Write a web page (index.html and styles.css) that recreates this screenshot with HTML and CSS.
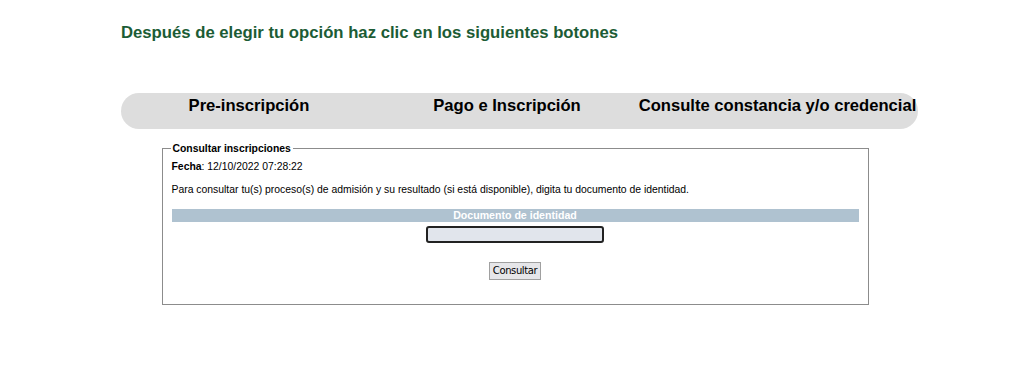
FILE: index.html
```html
<!DOCTYPE html>
<html lang="es">
<head>
  <meta charset="UTF-8" />
  <title>Consultar inscripciones</title>
  <link rel="stylesheet" href="styles.css">
</head>
<body>
  <div class="page">
    <h2 class="intro">Después de elegir tu opción haz clic en los siguientes botones</h2>

    <div class="tabs">
      <a class="tab" href="#">Pre-inscripción</a>
      <a class="tab" href="#">Pago e Inscripción</a>
      <a class="tab" href="#">Consulte constancia y/o credencial</a>
    </div>
  </div>

  <fieldset class="box">
    <legend>Consultar inscripciones</legend>
    <div class="fecha"><b>Fecha</b>: 12/10/2022 07:28:22</div>
    <p class="help">Para consultar tu(s) proceso(s) de admisión y su resultado (si está disponible), digita tu documento de identidad.</p>
    <div class="label">Documento de identidad</div>
    <div class="field">
      <input type="text" class="doc" autofocus>
    </div>
    <div class="field">
      <button class="btn">Consultar</button>
    </div>
  </fieldset>
</body>
</html>
```

FILE: styles.css
```css
body {
  margin: 0;
  font-family: "Liberation Sans", Arial, sans-serif;
  background: #fff;
  color: #000;
}

.page {
  margin-left: 121px;
  width: 797px;
}

.intro {
  color: #1c5c35;
  font-size: 16.7px;
  font-weight: bold;
  margin: 0;
  padding-top: 23px;
}

.tabs {
  margin-top: 50px;
  height: 36px;
  background: #dddddd;
  border-radius: 18px;
  display: grid;
  grid-template-columns: 256px 260px 281px;
}

.tab {
  color: #000;
  text-decoration: none;
  font-weight: bold;
  font-size: 16.6px;
  text-align: center;
  white-space: nowrap;
  padding-top: 3px;
}

.box {
  width: 687px;
  margin: 14px auto 0;
  border: 1px solid #8c8c8c;
  padding: 0 9px 24px;
  font-size: 10.4px;
}

.box legend {
  font-weight: bold;
  padding: 0 2px;
  margin-left: -1px;
}

.fecha {
  margin-top: 7px;
}

.help {
  margin: 12px 0 14px;
}

.label {
  background: #afc2d0;
  color: #fff;
  font-weight: bold;
  text-align: center;
  height: 13px;
  line-height: 12px;
  font-size: 10.6px;
}

.field {
  text-align: center;
}

.doc {
  width: 170px;
  height: 13px;
  margin-top: 4px;
  border: 2px solid #222;
  border-radius: 3px;
  background: #e1e5ec;
  outline: none;
  padding: 0 2px;
}

.btn {
  margin-top: 19px;
  font-family: "DejaVu Sans", sans-serif;
  font-size: 10px;
  background: #e6e6e9;
  border: 1px solid #a0a0a0;
  border-radius: 0;
  padding: 2px 3px 3px;
  letter-spacing: -0.4px;
}
```
